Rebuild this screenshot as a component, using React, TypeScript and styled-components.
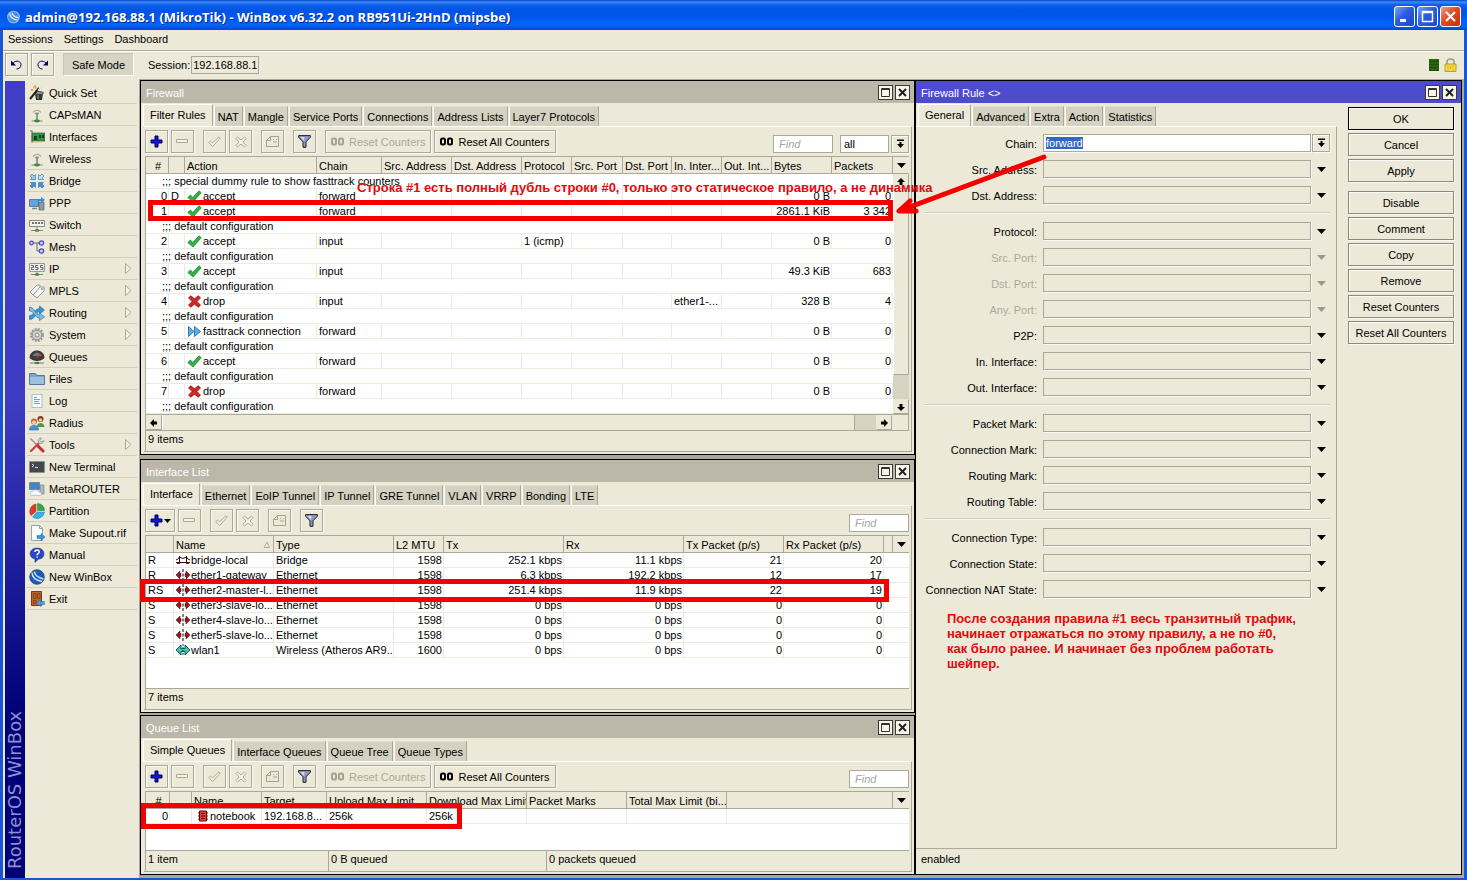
import React, { useEffect, useRef } from "react";
import styled, { createGlobalStyle, css } from "styled-components";

const FACE = "#ece9d8";
const SHADE = "#aca899";
const MARK = "#f40000";
const UI_FONT = '"Liberation Sans", Arial, sans-serif';

const GlobalStyle = createGlobalStyle`
  *, *::before, *::after { box-sizing: border-box; }
  html, body { margin: 0; }
  body, button, input, select, table {
    font-family: ${UI_FONT};
    font-size: 11px;
    line-height: 14px;
    color: #000;
  }
  button, input, select { margin: 0; padding: 0; border-radius: 0; }
  svg { display: block; flex: none; }
`;

/* ---------- application frame ---------- */

const AppFrame = styled.div`
  min-height: 100vh;
  display: flex;
  flex-direction: column;
  background: ${FACE};
  border: solid #1a55d8;
  border-width: 0 3px 2px 3px;
`;

const TitleBar = styled.header`
  height: 30px;
  margin: 0 -3px;
  padding: 3px 6px 0 7px;
  display: flex;
  align-items: center;
  gap: 5px;
  background: linear-gradient(#0a3fc4 0, #3d8bf8 2px, #0a5ee8 5px, #0054e3 11px, #0058ee 18px, #0066ff 25px, #0048d0 30px);
`;

const AppTitle = styled.h1`
  margin: 0;
  flex: 1;
  font: bold 13px/18px "Open Sans", "Noto Sans", sans-serif;
  color: #fff;
  text-shadow: 1px 1px 0 #0a2a80;
  white-space: nowrap;
`;

const CaptionButtons = styled.div`
  display: flex;
  gap: 2px;
`;

const CaptionButton = styled.button<{ $close?: boolean }>`
  width: 21px;
  height: 21px;
  display: grid;
  place-items: center;
  border: 1px solid #fff;
  border-radius: 3px;
  background: ${(p) =>
    p.$close
      ? "linear-gradient(135deg, #f0a088, #e04a20 45%, #c83010)"
      : "linear-gradient(135deg, #7ea2f8, #2a5ce0 45%, #1c48c8)"};
`;

const MenuBar = styled.nav`
  height: 21px;
  padding: 0 5px 2px;
  display: flex;
  align-items: center;
  gap: 11px;
  border-bottom: 1px solid ${SHADE};
`;

const MenuButton = styled.button`
  border: 0;
  background: none;
`;

const ToolBar = styled.div`
  height: 28px;
  padding: 0 7px 2px 2px;
  display: flex;
  align-items: center;
  border-top: 1px solid #fff;
`;

const bevel = css`
  border: 1px solid ${SHADE};
  background: ${FACE};
  box-shadow: inset 1px 1px 0 #fbfaf4, 1px 1px 0 #fbfaf4;
`;

const IconButton = styled.button<{ $wide?: boolean }>`
  ${bevel}
  width: ${(p) => (p.$wide ? 30 : 23)}px;
  height: 23px;
  display: flex;
  align-items: center;
  justify-content: center;
  gap: 1px;
`;

const SafeModeButton = styled.button`
  width: 71px;
  height: 23px;
  margin-left: 9px;
  border: 1px solid #c8c5b4;
  border-right-color: #fff;
  border-bottom-color: #fff;
  background: #d6d3c3;
`;

const SessionLabel = styled.label`
  margin-left: 14px;
  display: flex;
  align-items: center;
  gap: 1px;
`;

const SessionInput = styled.input`
  width: 68px;
  height: 18px;
  padding: 0 1px;
  border: 1px solid ${SHADE};
  background: ${FACE};
`;

const ToolGroup = styled.div`
  display: flex;
  gap: 3px;
`;

const StatusIcons = styled.div`
  margin-left: auto;
  display: flex;
  align-items: center;
  gap: 5px;
`;

const Meter = styled.span`
  width: 10px;
  height: 12px;
  background: repeating-linear-gradient(#2a6410 0 2px, #1e5008 2px 3px);
`;

const Body = styled.div`
  flex: 1;
  display: flex;
`;

const BrandStrip = styled.aside`
  width: 20px;
  margin: 2px 2px 0;
  padding: 9px 0;
  writing-mode: vertical-rl;
  transform: rotate(180deg);
  background: linear-gradient(to top, #403ec4 0, #3e3cc2 40%, #000078 80%);
  font: 18px/20px "DejaVu Sans", sans-serif;
  color: #8f8fd0;
`;

const SideMenu = styled.nav`
  width: 110px;
  margin-right: 2px;
  padding-top: 3px;
`;

const SideItem = styled.a`
  height: 22px;
  padding: 0 5px 0 2px;
  display: flex;
  align-items: center;
  gap: 4px;
  border-bottom: 1px solid #d2cfc0;
  color: #000;
  text-decoration: none;
  white-space: nowrap;
`;

const SideArrow = styled.svg`
  margin-left: auto;
`;

/* ---------- desktop with inner windows ---------- */

const Desktop = styled.main`
  position: relative;
  flex: 1;
  min-width: 0;
  display: grid;
  grid-template-columns: minmax(0, 775fr) minmax(0, 547fr);
  padding: 1px 2px 3px 1px;
  background: #aca899;
`;

const WindowColumn = styled.div`
  display: flex;
  flex-direction: column;
`;

const Win = styled.section<{ $gap?: number; $fill?: boolean }>`
  display: flex;
  flex-direction: column;
  margin-bottom: ${(p) => p.$gap || 0}px;
  flex: ${(p) => (p.$fill ? "1 0 auto" : "none")};
  border: 1px solid #000;
  background: ${FACE};
`;

const WinTitle = styled.header<{ $active?: boolean }>`
  height: 22px;
  padding: 1px 4px 0 5px;
  display: flex;
  align-items: center;
  gap: 2px;
  color: #fff;
  background: ${(p) => (p.$active ? "#4d4ccd" : "#bcb8a9")};
`;

const WinName = styled.h2`
  margin: 0;
  flex: 1;
  font: inherit;
`;

const WinButton = styled.button`
  width: 15px;
  height: 15px;
  display: grid;
  place-items: center;
  border: 1px solid #3c3a32;
  background: #f8f6ec;
`;

const Tabs = styled.div`
  height: 23px;
  padding-left: 2px;
  display: flex;
  align-items: flex-end;
  gap: 1px;
`;

const Tab = styled.button<{ $active?: boolean }>`
  height: ${(p) => (p.$active ? 22 : 20)}px;
  padding: ${(p) => (p.$active ? "0 6px 2px" : "0 3px")};
  border: solid;
  border-width: 1px 1px 0 1px;
  border-color: ${(p) => (p.$active ? "#fff" : "#e2dfce")} ${SHADE} #fff #fff;
  background: ${(p) => (p.$active ? FACE : "#d4d1c1")};
  white-space: nowrap;
`;

const Page = styled.div`
  flex: 1;
  display: flex;
  flex-direction: column;
  margin: 0 2px 2px 3px;
  padding: 0 2px 0 1px;
  border: solid;
  border-width: 1px 1px 1px 0;
  border-color: #fff ${SHADE} ${SHADE};
`;

const ListTools = styled.div`
  height: 29px;
  padding: 3px 0 3px;
  display: flex;
  align-items: flex-end;
  gap: 9px;
`;

const CounterButton = styled.button`
  ${bevel}
  height: 23px;
  padding: 0 5px;
  display: flex;
  align-items: center;
  gap: 4px;
  white-space: nowrap;
  &:disabled { color: ${SHADE}; }
`;

const Filters = styled.div`
  margin-left: auto;
  display: flex;
  gap: 2px;
`;

const FindInput = styled.input`
  width: 60px;
  height: 18px;
  padding: 0 5px;
  border: 1px solid ${SHADE};
  background: #fff;
  &::placeholder { color: #a5a5a0; font-style: italic; opacity: 1; }
`;

const FilterSelect = styled.select`
  width: 49px;
  height: 18px;
  margin-left: 5px;
  padding: 0 3px;
  appearance: none;
  border: 1px solid ${SHADE};
  background: #fff;
`;

const DropButton = styled.button<{ $flat?: boolean }>`
  ${bevel}
  width: 18px;
  height: 18px;
  display: grid;
  place-items: center;
  ${(p) => p.$flat && "border-color: transparent; background: none; box-shadow: none;"}
`;

const ListArea = styled.div<{ $min?: number }>`
  flex: 1;
  min-height: ${(p) => p.$min || 0}px;
  display: flex;
  border: solid ${SHADE};
  border-width: 1px 0 1px 1px;
  background: #fff;
`;

const Table = styled.table`
  flex: 1;
  width: 100%;
  align-self: flex-start;
  table-layout: fixed;
  border-spacing: 0;
  white-space: nowrap;
`;

const Th = styled.th<{ $center?: boolean }>`
  height: 17px;
  padding: 1px 0 0 2px;
  overflow: hidden;
  font-weight: normal;
  text-align: ${(p) => (p.$center ? "center" : "left")};
  background: ${FACE};
  border-right: 1px solid ${SHADE};
  border-bottom: 1px solid ${SHADE};
`;

const HeadInner = styled.span`
  display: flex;
  align-items: center;
  justify-content: space-between;
`;

const Td = styled.td<{ $num?: boolean; $bare?: boolean }>`
  height: 15px;
  padding: ${(p) => (p.$num ? "0 1px 0 0" : "0 0 0 2px")};
  overflow: hidden;
  text-align: ${(p) => (p.$num ? "right" : "left")};
  border-bottom: 1px solid #ecebe2;
  border-right: ${(p) => (p.$bare ? 0 : "1px solid #ecebe2")};
`;

const CommentTd = styled.td`
  height: 15px;
  padding: 0 0 0 16px;
  border-bottom: 1px solid #ecebe2;
`;

const CellInner = styled.span<{ $indent?: boolean }>`
  display: flex;
  align-items: center;
  gap: 1px;
  padding-left: ${(p) => (p.$indent ? 3 : 0)}px;
  height: 14px;
`;

const HeadButton = styled.button`
  width: 16px;
  height: 17px;
  display: grid;
  place-items: center;
  border: 0;
  border-bottom: 1px solid ${SHADE};
  background: ${FACE};
`;

const HeadButtonCell = styled.th`
  padding: 0;
  height: 17px;
`;

const SideRail = styled.div`
  width: 16px;
  display: flex;
  flex-direction: column;
`;

const VTrack = styled.div`
  flex: 1;
  display: flex;
  flex-direction: column;
  background: #d6d3c3;
`;

const ScrollButton = styled.button`
  width: 16px;
  height: 15px;
  display: grid;
  place-items: center;
  border: 1px solid ${FACE};
  border-bottom-color: ${SHADE};
  border-right-color: ${SHADE};
  background: ${FACE};
`;

const VThumb = styled.div`
  flex: 1;
  margin-bottom: 24px;
  border: 1px solid ${SHADE};
  border-top-color: #fff;
  border-left-color: #fff;
  background: ${FACE};
`;

const HTrack = styled.div`
  height: 16px;
  display: flex;
  background: #d6d3c3;
  border: solid ${SHADE};
  border-width: 0 1px 1px 1px;
`;

const HThumb = styled.div`
  flex: 1;
  margin-right: 21px;
  border-left: 1px solid #fff;
  border-right: 1px solid ${SHADE};
  background: ${FACE};
`;

const Corner = styled.div`
  width: 16px;
  background: ${FACE};
`;

const StatusLine = styled.footer`
  height: 20px;
  display: flex;
`;

const StatusCell = styled.span<{ $basis?: number }>`
  flex: ${(p) => (p.$basis ? `0 0 ${p.$basis}px` : "1")};
  padding: 1px 2px;
  border-left: 1px solid ${SHADE};
`;

/* ---------- rule editor ---------- */

const RuleBody = styled.div`
  flex: 1;
  display: flex;
`;

const RuleMain = styled.div`
  flex: 1;
  min-width: 0;
  display: flex;
  flex-direction: column;
`;

const Form = styled.form`
  flex: 1;
  padding: 7px 6px 0 0;
  border: solid;
  border-width: 1px 1px 1px 0;
  border-color: #fff ${SHADE} ${SHADE};
`;

const FieldGroup = styled.div`
  display: flex;
  flex-direction: column;
  gap: 8px;
  & + & {
    margin-top: 8px;
    padding-top: 9px;
    border-top: 1px solid #d2cfc0;
    box-shadow: inset 0 1px 0 #f8f6ec;
    margin-left: 8px;
  }
`;

const Field = styled.div`
  height: 18px;
  display: flex;
  align-items: center;
  justify-content: flex-end;
`;

const FieldLabel = styled.label<{ $dim?: boolean }>`
  flex: 1;
  padding-right: 6px;
  padding-top: 1px;
  text-align: right;
  white-space: nowrap;
  color: ${(p) => (p.$dim ? SHADE : "#000")};
`;

const FieldInput = styled.input<{ $filled?: boolean }>`
  width: 268px;
  height: 18px;
  padding: 0 2px;
  margin-right: 1px;
  border: 1px solid ${SHADE};
  background: ${(p) => (p.$filled ? "#fff" : FACE)};
  outline: none;
  box-shadow: 1px 1px 0 #fbfaf4;
  &::selection { color: #fff; background: #316ac5; }
`;

const Actions = styled.div`
  width: 124px;
  padding: 4px 7px 0 11px;
  display: flex;
  flex-direction: column;
  gap: 9px;
`;

const ActionGroup = styled.div`
  display: flex;
  flex-direction: column;
  gap: 3px;
`;

const ActionButton = styled.button<{ $primary?: boolean }>`
  height: 23px;
  border: 1px solid ${(p) => (p.$primary ? "#000" : "#8c897a")};
  background: ${FACE};
  box-shadow: inset 1px 1px 0 #fbfaf4, 1px 1px 0 #fbfaf4;
  white-space: nowrap;
`;

const RuleStatus = styled.footer`
  height: 25px;
  padding: 3px 5px;
`;

/* ---------- red notes over the desktop ---------- */

const MarkBox = styled.div<{ $x: number; $y: number; $w: number; $h: number }>`
  position: absolute;
  left: ${(p) => p.$x}px;
  top: ${(p) => p.$y}px;
  width: ${(p) => p.$w}px;
  height: ${(p) => p.$h}px;
  border: 5px solid ${MARK};
  pointer-events: none;
`;

const Note = styled.p<{ $x: number; $y: number }>`
  position: absolute;
  left: ${(p) => p.$x}px;
  top: ${(p) => p.$y}px;
  margin: 0;
  font: bold 13px/15px "Liberation Sans", Arial, sans-serif;
  color: #e00b0b;
  white-space: nowrap;
`;

const ArrowMark = styled.svg`
  position: absolute;
  left: 751px;
  top: 71px;
  pointer-events: none;
`;

/* ---------- icons ---------- */

const icon = (children: React.ReactNode) => (
  <svg width="16" height="16" viewBox="0 0 16 16" aria-hidden="true">
    {children}
  </svg>
);

const antenna = icon(
  <>
    <path d="M4 5.500q4-4.500 8 0M6 7q2-2 4 0" fill="none" stroke="#a3a69c" strokeWidth="1.2" />
    <path d="M8 6v7" stroke="#6c7a68" strokeWidth="1.4" />
    <path d="M2.500 14h11" stroke="#8c9a88" strokeWidth="1.2" />
    <ellipse cx="8" cy="14" rx="3" ry="1.4" fill="#3c8a3c" />
  </>
);

const ICONS: Record<string, React.ReactNode> = {
  "Quick Set": icon(
    <>
      <path d="M6 8h8l-1 7H7z" fill="#333" />
      <ellipse cx="10" cy="8" rx="4.500" ry="1.500" fill="#999" stroke="#222" strokeWidth=".7" />
      <path d="M1 14 10 3" stroke="#222" strokeWidth="2" />
      <path d="M9 5.500 12 2" stroke="#ddd" strokeWidth="1.500" />
      <path d="M6 0v4M4 2h4M2 4l2 2M2 6l2-2" stroke="#d9a520" strokeWidth="1" />
      <path d="M9 10v4" stroke="#aaa" />
    </>
  ),
  CAPsMAN: antenna,
  Interfaces: icon(
    <>
      <path d="M1 2h2v12" fill="none" stroke="#8a8d86" strokeWidth="1.300" />
      <path d="M3 4h13v8H3z" fill="#3f8f4c" stroke="#2a6535" strokeWidth=".7" />
      <path d="M5 7h3v4H5zM10 6h2v3h-2zM13 6h2v3h-2z" fill="#163f1f" />
      <path d="M5 12v1.500M7 12v1.500M9 12v1.500M11 12v1.500" stroke="#c9b34a" />
    </>
  ),
  Wireless: antenna,
  Bridge: icon(
    <g stroke="#2a6ea8" strokeWidth=".6">
      <path d="M1 3l2-2 2 2 1.500-1.500v5h-5L3 5z" fill="#9ccdf0" />
      <path d="M15 3l-2-2-2 2-1.500-1.500v5h5L13 5z" fill="#c5e1f4" />
      <path d="M1 13l2 2 2-2 1.500 1.500v-5h-5L3 11z" fill="#3d94d8" />
      <path d="M15 13l-2 2-2-2-1.500 1.500v-5h5L13 11z" fill="#3d94d8" />
    </g>
  ),
  PPP: icon(
    <>
      <path d="M.5 4.500h9v7h-9z" fill="#5ea6e0" stroke="#6a7d90" />
      <path d="M3 13.500h5" stroke="#7c8894" strokeWidth="1.500" />
      <path d="M10 7h5v8h-5z" fill="#8c98a4" stroke="#5a6672" strokeWidth=".7" />
      <path d="M8 4h4V2l4 3-4 3V6H8z" fill="#2f8edc" />
    </>
  ),
  Switch: icon(
    <>
      <path d="M.5 3.500h15v6H.5z" fill="#f4f4ee" stroke="#888" />
      <path d="M3 6h2M6 6h2M9 6h2M12 6h2" stroke="#444" strokeWidth="1.500" />
      <path d="M8 10v3M2 13.500h12" stroke="#888" />
      <ellipse cx="8" cy="13.500" rx="2.500" ry="1.300" fill="#3c8a3c" />
    </>
  ),
  Mesh: icon(
    <>
      <path d="M3 4h9M8 4v8h4" fill="none" stroke="#666" />
      <g fill="#c9c9f6" stroke="#4a4ac0" strokeWidth="1.200">
        <circle cx="2.500" cy="4" r="1.800" />
        <circle cx="12.500" cy="4" r="2.200" />
        <circle cx="12.500" cy="12" r="2.200" />
      </g>
    </>
  ),
  IP: icon(
    <>
      <path d="M.5 2.500h15v8H.5z" fill="#f1f1ec" stroke="#999" />
      <path d="M2 4.500h2.500v2H2.500v2H5M9 4.500H6.500v2H9v2H6.500M14 4.500h-2.500v2H14v2h-2.500" fill="none" stroke="#555" strokeWidth=".9" />
      <path d="M8 11v2M2 13.500h12" stroke="#888" />
      <ellipse cx="8" cy="13.500" rx="2.500" ry="1.300" fill="#3c8a3c" />
    </>
  ),
  MPLS: icon(
    <g fill="#f3f4f4" stroke="#8f979c" strokeWidth=".9">
      <path d="M1 9 8 2l3 0 0 3-7 7z" />
      <path d="M4 12 11 4l4 0 0 4-7 7z" />
      <circle cx="13" cy="6" r=".8" />
    </g>
  ),
  Routing: icon(
    <>
      <path d="M.5 10.500c5 0 5-7 10-7V1l5 4-5 4V6.500c-3 0-4 8-10 8z" fill="#3b92d6" stroke="#25689e" strokeWidth=".6" />
      <path d="M.5 2c5 0 6 8 10 8V7.500l5 4.500-5 3.500V13C6 13 5 6 .5 6z" fill="#79bbea" stroke="#25689e" strokeWidth=".6" />
    </>
  ),
  System: icon(
    <>
      <circle cx="8" cy="8" r="6" fill="none" stroke="#989898" strokeWidth="2" strokeDasharray="2 1.140" />
      <circle cx="8" cy="8" r="4.800" fill="#d2d2d0" stroke="#8a8a8a" />
      <circle cx="8" cy="8" r="2" fill={FACE} stroke="#8a8a8a" />
    </>
  ),
  Queues: icon(
    <>
      <path d="M.5 9C.5-1 15.500-1 15.500 9q-3 3-7.500 3T.5 9z" fill="#3a3a3a" />
      <path d="M3 7q5-7 10 0z" fill="#777" />
      <path d="m7 9 5-4" stroke="#d03030" strokeWidth="1.300" />
      <path d="M1 14h14" stroke="#777" />
      <ellipse cx="8" cy="14" rx="2.500" ry="1.300" fill="#3c8a3c" />
    </>
  ),
  Files: icon(
    <>
      <path d="M.5 2.500h6l1 2h8v9H.5z" fill="#7ba6cc" stroke="#4f7ba2" />
      <path d="M1 6h14v7H1z" fill="#9cc0de" />
    </>
  ),
  Log: icon(
    <>
      <path d="m3 1 1 1 1-1 1 1 1-1 1 1 1-1 1 1 1-1 1 1 1-1v14l-1-1-1 1-1-1-1 1-1-1-1 1-1-1-1 1-1-1-1 1z" fill="#f6fafb" stroke="#9cacb4" strokeWidth=".7" />
      <path d="M5 4.500h3M5 6.500h6M5 8.500h5M5 10.500h6" stroke="#7fa3b5" />
    </>
  ),
  Radius: icon(
    <>
      <circle cx="11.500" cy="4" r="3" fill="#7d3a1c" />
      <circle cx="11.500" cy="5" r="1.800" fill="#f0c8a0" />
      <path d="M8 12q0-4 3.500-4t4 4z" fill="#4c9a4c" />
      <circle cx="5" cy="6.500" r="3" fill="#c06a24" />
      <circle cx="5" cy="7.500" r="1.900" fill="#f5d3b0" />
      <path d="M.5 15q0-4.500 4.500-4.500T9.500 15z" fill="#4b8fd4" stroke="#2a68a8" strokeWidth=".6" />
    </>
  ),
  Tools: icon(
    <>
      <path d="m1.500 1.500 8 8" stroke="#999" strokeWidth="1.600" />
      <path d="m9 9 5 5" stroke="#c03030" strokeWidth="3" strokeLinecap="round" />
      <path d="m2 14 8-8" stroke="#c84040" strokeWidth="2.200" strokeLinecap="round" />
      <path d="M15 3.500 12.500 5 11 3.500 12.500 1C9.500.5 8.500 3.500 9.500 6c2.500 1.500 5.500 0 5.500-2.500z" fill="#d0d4d6" stroke="#83898c" strokeWidth=".7" />
    </>
  ),
  "New Terminal": icon(
    <>
      <path d="M.5 2.500h15v11H.5z" fill="#44484c" stroke="#8c9094" />
      <path d="m3 5 2 1.500L3 8M6 8.500h3" fill="none" stroke="#dfe3e6" />
    </>
  ),
  MetaROUTER: icon(
    <>
      <path d="M.5 1.500h10v7H.5z" fill="#3f86cc" stroke="#7a8794" />
      <path d="M11 4h4v9h-4z" fill="#b0b8c0" stroke="#6c7884" strokeWidth=".6" />
      <path d="M3 14.500q-2.500-.5-2-2.500t2.500-1.500Q5 8 7.500 9t2.500 2q2.500 0 2.500 1.800t-2 1.700z" fill="#f5f8fa" stroke="#a0adb8" strokeWidth=".6" />
    </>
  ),
  Partition: icon(
    <>
      <path d="M7 8.500V1a7.500 7.500 0 0 0-5 11.500z" fill="#dc3b30" stroke="#a82018" strokeWidth=".5" />
      <path d="M8.500 7.500V.5a7 7 0 0 1 7 7z" fill="#35a84a" stroke="#1c7a30" strokeWidth=".5" />
      <path d="M8 9h7.500a7.500 7.500 0 0 1-12 5z" fill="#40b0e0" stroke="#2484b4" strokeWidth=".5" />
    </>
  ),
  "Make Supout.rif": icon(
    <>
      <path d="M2.500.5h8l3 3v12h-11z" fill="#fbfdfd" stroke="#94a4ac" />
      <path d="M10.500.5v3h3" fill="none" stroke="#94a4ac" />
      <path d="M8 10.500h4v-2l4 3.500-4 3.500v-2H8z" fill="#3c94dc" stroke="#1f68a4" strokeWidth=".5" />
    </>
  ),
  Manual: icon(
    <>
      <path d="M8 1c9 0 9 11 1.500 11L6 15.500V12C-1.500 10.500 0 1 8 1z" fill="#2c48c4" stroke="#172c88" strokeWidth=".6" />
      <path d="M5.800 5q.3-2 2.300-2t2.200 1.800Q10.300 6 8.200 7.500v.8M8.200 9.500v1.300" fill="none" stroke="#fff" strokeWidth="1.500" />
    </>
  ),
  "New WinBox": icon(
    <>
      <circle cx="8" cy="8" r="7.300" fill="#1d5eb0" stroke="#123a78" strokeWidth=".7" />
      <path d="M3 3.500q0 7 10 9M5.500 2.500q0 5 9 7.500" fill="none" stroke="#cfe4fa" strokeWidth="1.500" />
    </>
  ),
  Exit: icon(
    <>
      <path d="M2.500.5h10v14h-10z" fill="#b8682c" stroke="#7a3c12" />
      <path d="M4.500 2.500h2.500v5H4.500zM8.500 2.500H11v5H8.500zM4.500 9.500h2.500v3H4.500z" fill="none" stroke="#7a3c12" strokeWidth=".8" />
      <path d="M15.500 10.500h-4v-2L7.500 12l4 3.500v-2h4z" fill="#48a0e4" stroke="#1f68a4" strokeWidth=".5" />
    </>
  ),
};

const AppLogo = () => (
  <svg width="13" height="14" viewBox="0 0 14 14" aria-hidden="true">
    <circle cx="7" cy="7" r="6.800" fill="#9cc4f4" />
    <circle cx="7" cy="7" r="5.800" fill="#4f8cdc" />
    <path d="M3 3q0 6 8.500 7.500M5.500 2.500q0 4 7 5.500" fill="none" stroke="#e8f2ff" strokeWidth="1.300" />
  </svg>
);

const Caret = ({ dim }: { dim?: boolean }) => (
  <svg width="9" height="5" viewBox="0 0 9 5" aria-hidden="true">
    <path d="M0 0h9L4.500 5z" fill={dim ? "#9c998a" : "#000"} />
  </svg>
);

const DropArrow = () => (
  <svg width="9" height="10" viewBox="0 0 9 10" aria-hidden="true">
    <path d="M1 0.500h7v1.500H1zM3.500 3h2v2H8L4.500 9 1 5h2.500z" />
  </svg>
);

const ScrollGlyph = ({ turn }: { turn: number }) => (
  <svg width="8" height="8" viewBox="0 0 8 8" aria-hidden="true">
    <path d="M4 0 8 4H5.500v3h-3V4H0z" transform={`rotate(${turn} 4 4)`} />
  </svg>
);

const Plus = () => (
  <svg width="13" height="13" viewBox="0 0 13 13" aria-hidden="true">
    <path d="M5 1h3v4h4v3H8v4H5V8H1V5h4z" fill="#1414d8" stroke="#00005c" strokeWidth="1" />
  </svg>
);

const Minus = () => (
  <svg width="13" height="5" viewBox="0 0 13 5" aria-hidden="true">
    <path d="M.5.5h11v3H.5z" fill="#f6f4ea" stroke={SHADE} />
  </svg>
);

const TickOutline = () => (
  <svg width="13" height="12" viewBox="0 0 13 12" aria-hidden="true">
    <path d="m.8 6.500 1.700-1.500 2 2L11 .8l1.200 1.200-7.500 8.500z" fill="#f6f4ea" stroke={SHADE} />
  </svg>
);

const CrossOutline = () => (
  <svg width="12" height="12" viewBox="0 0 12 12" aria-hidden="true">
    <path d="m1 2.500 1.500-1.500L6 4l3.500-3L11 2.500 8 6l3 3.500L9.500 11 6 8l-3.500 3L1 9.500 4 6z" fill="#f6f4ea" stroke={SHADE} />
  </svg>
);

const CommentOutline = () => (
  <svg width="14" height="12" viewBox="0 0 14 12" aria-hidden="true">
    <path d="M4.500.5h8v10h-12v-6zM4.500.5v4h-4M7 3.500h1M10 3.500h1M7 6h4" fill="none" stroke="#a5a193" />
  </svg>
);

const Funnel = () => (
  <svg width="13" height="13" viewBox="0 0 13 13" aria-hidden="true">
    <path d="M.6.6h11.800v1.600L8 6.800v5.500H5V6.800L.6 2.200z" fill="#8d99c4" stroke="#222" strokeWidth="1" />
    <path d="M2.500 2h4L6 6z" fill="#d8def2" />
  </svg>
);

const Zeros = ({ dim }: { dim?: boolean }) => (
  <svg width="14" height="9" viewBox="0 0 14 9" aria-hidden="true">
    <g fill="none" stroke={dim ? "#a5a193" : "#000"} strokeWidth="2">
      <rect x="1" y="1.500" width="4" height="6" rx="1.500" />
      <rect x="8" y="1.500" width="4" height="6" rx="1.500" />
    </g>
  </svg>
);

const ACTION_ICONS: Record<string, React.ReactNode> = {
  accept: (
    <svg width="15" height="13" viewBox="0 0 15 13" aria-hidden="true">
      <path d="m.8 7.500 2.700-2.500 2.300 2.500L12 .8l2.200 2L6 12z" fill="#2fb344" stroke="#1c8a30" strokeWidth=".8" />
    </svg>
  ),
  drop: (
    <svg width="15" height="13" viewBox="0 0 15 13" aria-hidden="true">
      <path d="m1.500 2.800 2.300-2 3.700 3 3.700-3 2.300 2L10 6.500l3.500 3.700-2.300 2-3.700-3-3.700 3-2.300-2L5 6.500z" fill="#cc2a2a" stroke="#8c1414" strokeWidth=".8" />
    </svg>
  ),
  "fasttrack connection": (
    <svg width="15" height="13" viewBox="0 0 15 13" aria-hidden="true">
      <path d="M1.500 1.500 7 6.500l-5.500 5zM7.500 1.500l6 5-6 5z" fill="#58aee4" stroke="#2474b0" strokeWidth=".9" />
    </svg>
  ),
};

const PORT_ICONS: Record<string, React.ReactNode> = {
  bridge: (
    <svg width="14" height="10" viewBox="0 0 14 10" aria-hidden="true">
      <path d="M3.500 1v8M10.500 1v8M0 7.500h14M0 5q3-1 3.500-3 3.500 3 7 0 .5 2 3.500 3" fill="none" stroke="#2a0c12" />
      <path d="M1 8.500h3M10 8.500h3" stroke="#a01828" />
    </svg>
  ),
  ether: (
    <svg width="14" height="12" viewBox="0 0 14 12" aria-hidden="true">
      <path d="M0 6l4-4v2.500h1v3H4V10zM14 6l-4-4v2.500H9v3h1V10z" fill="#9c1426" stroke="#2c0408" strokeWidth=".5" />
      <path d="M7 0v3M7 4.500v3M7 9v3" stroke="#000" />
    </svg>
  ),
  wlan: (
    <svg width="14" height="12" viewBox="0 0 14 12" aria-hidden="true">
      <path d="M0 6l5-5v3.500h4V1l5 5-5 5V7.500H5V11z" fill="#35c6b4" stroke="#0c4c48" strokeWidth=".9" />
      <path d="M7 0v12" stroke="#0c3c3a" strokeDasharray="2 1" />
    </svg>
  ),
};

const QueueIcon = () => (
  <svg width="12" height="12" viewBox="0 0 12 12" aria-hidden="true">
    <path d="M2.500 1h7v10h-7z" fill="#e84040" stroke="#600" />
    <path d="M1 3h2M1 6h2M1 9h2M9 3h2M9 6h2M9 9h2M4 3.500h4M4 6h4M4 8.500h4" stroke="#600" />
  </svg>
);

/* ---------- shared pieces ---------- */

const WindowHeading = ({ name, active }: { name: string; active?: boolean }) => (
  <WinTitle $active={active}>
    <WinName>{name}</WinName>
    <WinButton aria-label={`Maximize ${name}`}>
      <svg width="9" height="9" viewBox="0 0 9 9" aria-hidden="true">
        <path d="M.5.5h8v8h-8zM0 1.500h9" fill="none" stroke="#33312a" />
      </svg>
    </WinButton>
    <WinButton aria-label={`Close ${name}`}>
      <svg width="9" height="9" viewBox="0 0 9 9" aria-hidden="true">
        <path d="m1 1 7 7M8 1 1 8" stroke="#222" strokeWidth="2" />
      </svg>
    </WinButton>
  </WinTitle>
);

const TabRow = ({ names }: { names: string[] }) => (
  <Tabs role="tablist">
    {names.map((n, i) => (
      <Tab key={n} type="button" role="tab" aria-selected={i === 0} $active={i === 0}>
        {n}
      </Tab>
    ))}
  </Tabs>
);

const ListToolBar = ({ menuAdd, counters, children }: { menuAdd?: boolean; counters?: boolean; children?: React.ReactNode }) => (
  <ListTools>
    <ToolGroup>
      <IconButton $wide={menuAdd} aria-label="Add">
        <Plus />
        {menuAdd && (
          <svg width="7" height="4" viewBox="0 0 7 4" aria-hidden="true">
            <path d="M0 0h7L3.500 4z" />
          </svg>
        )}
      </IconButton>
      <IconButton disabled aria-label="Remove"><Minus /></IconButton>
    </ToolGroup>
    <ToolGroup>
      <IconButton disabled aria-label="Enable"><TickOutline /></IconButton>
      <IconButton disabled aria-label="Disable"><CrossOutline /></IconButton>
    </ToolGroup>
    <IconButton disabled aria-label="Comment"><CommentOutline /></IconButton>
    <IconButton aria-label="Filter"><Funnel /></IconButton>
    {counters && (
      <ToolGroup>
        <CounterButton disabled><Zeros dim />Reset Counters</CounterButton>
        <CounterButton><Zeros />Reset All Counters</CounterButton>
      </ToolGroup>
    )}
    <Filters>
      <FindInput placeholder="Find" aria-label="Find" />
      {children}
    </Filters>
  </ListTools>
);

const Columns = ({ widths }: { widths: (number | null)[] }) => (
  <colgroup>
    {widths.map((w, i) => (
      <col key={i} width={w === null ? undefined : w} />
    ))}
  </colgroup>
);

const HeadCell = () => (
  <HeadButtonCell>
    <HeadButton aria-label="Select columns"><Caret /></HeadButton>
  </HeadButtonCell>
);

/* ---------- firewall list ---------- */

type Rule = { n: number; flag?: string; note?: string; action: string; chain: string; proto?: string; inIf?: string; bytes: string; packets: string };

const DEF = "default configuration";
const RULES: Rule[] = [
  { n: 0, flag: "D", note: "special dummy rule to show fasttrack counters", action: "accept", chain: "forward", bytes: "0 B", packets: "0" },
  { n: 1, action: "accept", chain: "forward", bytes: "2861.1 KiB", packets: "3 342" },
  { n: 2, note: DEF, action: "accept", chain: "input", proto: "1 (icmp)", bytes: "0 B", packets: "0" },
  { n: 3, note: DEF, action: "accept", chain: "input", bytes: "49.3 KiB", packets: "683" },
  { n: 4, note: DEF, action: "drop", chain: "input", inIf: "ether1-...", bytes: "328 B", packets: "4" },
  { n: 5, note: DEF, action: "fasttrack connection", chain: "forward", bytes: "0 B", packets: "0" },
  { n: 6, note: DEF, action: "accept", chain: "forward", bytes: "0 B", packets: "0" },
  { n: 7, note: DEF, action: "drop", chain: "forward", bytes: "0 B", packets: "0" },
];
const RULE_HEADS = ["#", "", "Action", "Chain", "Src. Address", "Dst. Address", "Protocol", "Src. Port", "Dst. Port", "In. Inter...", "Out. Int...", "Bytes", "Packets"];

const CommentRow = ({ text }: { text: string }) => (
  <tr>
    <CommentTd colSpan={13}>;;; {text}</CommentTd>
  </tr>
);

const FirewallWindow = () => (
  <Win $gap={4}>
    <WindowHeading name="Firewall" />
    <TabRow names={["Filter Rules", "NAT", "Mangle", "Service Ports", "Connections", "Address Lists", "Layer7 Protocols"]} />
    <Page>
      <ListToolBar counters>
        <FilterSelect aria-label="Chain filter" defaultValue="all">
          <option value="all">all</option>
        </FilterSelect>
        <DropButton aria-label="Open chain filter"><DropArrow /></DropButton>
      </ListToolBar>
      <ListArea>
        <Table>
          <Columns widths={[23, 16, 132, 65, 70, 70, 50, 51, 49, 50, 50, 60, null]} />
          <thead>
            <tr>
              {RULE_HEADS.map((h, i) => (
                <Th key={i} $center={i === 0}>{h}</Th>
              ))}
            </tr>
          </thead>
          <tbody>
            {RULES.map((r) => (
              <React.Fragment key={r.n}>
                {r.note && <CommentRow text={r.note} />}
                <tr>
                  <Td $num>{r.n}</Td>
                  <Td>{r.flag}</Td>
                  <Td><CellInner>{ACTION_ICONS[r.action]}{r.action}</CellInner></Td>
                  <Td>{r.chain}</Td>
                  <Td />
                  <Td />
                  <Td>{r.proto}</Td>
                  <Td />
                  <Td />
                  <Td>{r.inIf}</Td>
                  <Td />
                  <Td $num>{r.bytes}</Td>
                  <Td $num>{r.packets}</Td>
                </tr>
              </React.Fragment>
            ))}
            <CommentRow text={DEF} />
          </tbody>
        </Table>
        <SideRail>
          <HeadButton aria-label="Select columns"><Caret /></HeadButton>
          <VTrack>
            <ScrollButton aria-label="Scroll up"><ScrollGlyph turn={0} /></ScrollButton>
            <VThumb />
            <ScrollButton aria-label="Scroll down"><ScrollGlyph turn={180} /></ScrollButton>
          </VTrack>
        </SideRail>
      </ListArea>
      <HTrack>
        <ScrollButton aria-label="Scroll left"><ScrollGlyph turn={270} /></ScrollButton>
        <HThumb />
        <ScrollButton aria-label="Scroll right"><ScrollGlyph turn={90} /></ScrollButton>
        <Corner />
      </HTrack>
      <StatusLine><StatusCell>9 items</StatusCell></StatusLine>
    </Page>
  </Win>
);

/* ---------- interface list ---------- */

const PORTS: [string, string, string, string, string, string, string, string, string][] = [
  ["R", "bridge", "bridge-local", "Bridge", "1598", "252.1 kbps", "11.1 kbps", "21", "20"],
  ["R", "ether", "ether1-gateway", "Ethernet", "1598", "6.3 kbps", "192.2 kbps", "12", "17"],
  ["RS", "ether", "ether2-master-l...", "Ethernet", "1598", "251.4 kbps", "11.9 kbps", "22", "19"],
  ["S", "ether", "ether3-slave-lo...", "Ethernet", "1598", "0 bps", "0 bps", "0", "0"],
  ["S", "ether", "ether4-slave-lo...", "Ethernet", "1598", "0 bps", "0 bps", "0", "0"],
  ["S", "ether", "ether5-slave-lo...", "Ethernet", "1598", "0 bps", "0 bps", "0", "0"],
  ["S", "wlan", "wlan1", "Wireless (Atheros AR9...", "1600", "0 bps", "0 bps", "0", "0"],
];

const InterfaceWindow = () => (
  <Win $gap={2}>
    <WindowHeading name="Interface List" />
    <TabRow names={["Interface", "Ethernet", "EoIP Tunnel", "IP Tunnel", "GRE Tunnel", "VLAN", "VRRP", "Bonding", "LTE"]} />
    <Page>
      <ListToolBar menuAdd />
      <ListArea $min={154}>
        <Table>
          <Columns widths={[28, 100, 120, 50, 120, 120, 100, 100, null, 16]} />
          <thead>
            <tr>
              {["", "Name", "Type", "L2 MTU", "Tx", "Rx", "Tx Packet (p/s)", "Rx Packet (p/s)", ""].map((h, i) => (
                <Th key={i}>
                  {h === "Name" ? (
                    <HeadInner>
                      {h}
                      <svg width="10" height="8" viewBox="0 0 10 8" aria-hidden="true">
                        <path d="M1 6.500 4 1l2.500 5.500z" fill="none" stroke="#b4b0a0" />
                      </svg>
                    </HeadInner>
                  ) : h}
                </Th>
              ))}
              <HeadCell />
            </tr>
          </thead>
          <tbody>
            {PORTS.map(([flag, kind, name, ...rest]) => (
              <tr key={name}>
                <Td>{flag}</Td>
                <Td><CellInner>{PORT_ICONS[kind]}{name}</CellInner></Td>
                {rest.map((v, i) => (
                  <Td key={i} $num={i > 0}>{v}</Td>
                ))}
                <Td $bare />
                <Td $bare />
              </tr>
            ))}
          </tbody>
        </Table>
      </ListArea>
      <StatusLine><StatusCell>7 items</StatusCell></StatusLine>
    </Page>
  </Win>
);

/* ---------- queue list ---------- */

const QueueWindow = () => (
  <Win $fill>
    <WindowHeading name="Queue List" />
    <TabRow names={["Simple Queues", "Interface Queues", "Queue Tree", "Queue Types"]} />
    <Page>
      <ListToolBar counters />
      <ListArea $min={56}>
        <Table>
          <Columns widths={[24, 22, 70, 65, 100, 100, 100, 100, null, 16]} />
          <thead>
            <tr>
              {["#", "", "Name", "Target", "Upload Max Limit", "Download Max Limit", "Packet Marks", "Total Max Limit (bi...", ""].map((h, i) => (
                <Th key={i} $center={i === 0}>{h}</Th>
              ))}
              <HeadCell />
            </tr>
          </thead>
          <tbody>
            <tr>
              <Td $num>0</Td>
              <Td />
              <Td><CellInner $indent><QueueIcon />notebook</CellInner></Td>
              <Td>192.168.8...</Td>
              <Td>256k</Td>
              <Td>256k</Td>
              <Td />
              <Td />
              <Td $bare />
              <Td $bare />
            </tr>
          </tbody>
        </Table>
      </ListArea>
      <StatusLine>
        <StatusCell $basis={183}>1 item</StatusCell>
        <StatusCell $basis={218}>0 B queued</StatusCell>
        <StatusCell>0 packets queued</StatusCell>
      </StatusLine>
    </Page>
  </Win>
);

/* ---------- rule window ---------- */

const FIELD_GROUPS = [
  ["Chain", "Src. Address", "Dst. Address"],
  ["Protocol", "Src. Port", "Dst. Port", "Any. Port", "P2P", "In. Interface", "Out. Interface"],
  ["Packet Mark", "Connection Mark", "Routing Mark", "Routing Table"],
  ["Connection Type", "Connection State", "Connection NAT State"],
];

const RuleWindow = () => {
  const chain = useRef<HTMLInputElement>(null);
  useEffect(() => {
    chain.current?.focus();
    chain.current?.select();
  }, []);
  return (
    <Win $fill>
      <WindowHeading name="Firewall Rule <>" active />
      <RuleBody>
        <RuleMain>
          <TabRow names={["General", "Advanced", "Extra", "Action", "Statistics"]} />
          <Form>
            {FIELD_GROUPS.map((group) => (
              <FieldGroup key={group[0]}>
                {group.map((name) => {
                  const id = name.toLowerCase().replace(/[^a-z0-9]+/g, "-");
                  const dim = / Port$/.test(name);
                  const isChain = name === "Chain";
                  return (
                    <Field key={name}>
                      <FieldLabel htmlFor={id} $dim={dim}>{name}:</FieldLabel>
                      <FieldInput
                        id={id}
                        ref={isChain ? chain : undefined}
                        $filled={isChain}
                        defaultValue={isChain ? "forward" : ""}
                        disabled={dim}
                      />
                      <DropButton type="button" $flat={!isChain} disabled={dim} aria-label={`Choose ${name}`}>
                        {isChain ? <DropArrow /> : <Caret dim={dim} />}
                      </DropButton>
                    </Field>
                  );
                })}
              </FieldGroup>
            ))}
          </Form>
        </RuleMain>
        <Actions>
          <ActionGroup>
            <ActionButton $primary>OK</ActionButton>
            <ActionButton>Cancel</ActionButton>
            <ActionButton>Apply</ActionButton>
          </ActionGroup>
          <ActionGroup>
            {["Disable", "Comment", "Copy", "Remove", "Reset Counters", "Reset All Counters"].map((n) => (
              <ActionButton key={n}>{n}</ActionButton>
            ))}
          </ActionGroup>
        </Actions>
      </RuleBody>
      <RuleStatus>enabled</RuleStatus>
    </Win>
  );
};

/* ---------- page ---------- */

const WITH_SUBMENU = ["IP", "MPLS", "Routing", "System", "Tools"];

export default function App() {
  return (
    <>
      <GlobalStyle />
      <AppFrame>
        <TitleBar>
          <AppLogo />
          <AppTitle>admin@192.168.88.1 (MikroTik) - WinBox v6.32.2 on RB951Ui-2HnD (mipsbe)</AppTitle>
          <CaptionButtons>
            <CaptionButton aria-label="Minimize">
              <svg width="13" height="13" viewBox="0 0 13 13" aria-hidden="true"><path d="M2 9h6v3H2z" fill="#fff" /></svg>
            </CaptionButton>
            <CaptionButton aria-label="Maximize">
              <svg width="13" height="13" viewBox="0 0 13 13" aria-hidden="true"><path d="M1.500 1.500h10v10h-10zM1 2.500h11" fill="none" stroke="#fff" strokeWidth="1.500" /></svg>
            </CaptionButton>
            <CaptionButton $close aria-label="Close">
              <svg width="13" height="13" viewBox="0 0 13 13" aria-hidden="true"><path d="m2 2 9 9M11 2l-9 9" stroke="#fff" strokeWidth="2.200" /></svg>
            </CaptionButton>
          </CaptionButtons>
        </TitleBar>
        <MenuBar>
          <MenuButton>Sessions</MenuButton>
          <MenuButton>Settings</MenuButton>
          <MenuButton>Dashboard</MenuButton>
        </MenuBar>
        <ToolBar>
          <ToolGroup>
            <IconButton aria-label="Undo">
              <svg width="13" height="13" viewBox="0 0 13 13" aria-hidden="true">
                <path d="M3 5C6.500 1.500 11 3.500 11 6.500S9 11 6.500 11" fill="none" stroke="#00006c" strokeWidth="1" />
                <path d="M1 2.500v5h5z" fill="#00006c" />
              </svg>
            </IconButton>
            <IconButton aria-label="Redo">
              <svg width="13" height="13" viewBox="0 0 13 13" aria-hidden="true">
                <path d="M10 5C6.500 1.500 2 3.500 2 6.500S4 11 6.500 11" fill="none" stroke="#00006c" strokeWidth="1" />
                <path d="M12 2.500v5H7z" fill="#00006c" />
              </svg>
            </IconButton>
          </ToolGroup>
          <SafeModeButton>Safe Mode</SafeModeButton>
          <SessionLabel>
            Session:
            <SessionInput readOnly value="192.168.88.1" />
          </SessionLabel>
          <StatusIcons>
            <Meter />
            <svg width="13" height="14" viewBox="0 0 13 14" aria-hidden="true">
              <path d="M3 6V4q0-3 3.500-3T10 4v2" fill="none" stroke="#a09a78" strokeWidth="1.500" />
              <path d="M1 6h11v7.500H1z" fill="#f6dc4c" stroke="#a88c20" strokeWidth=".8" />
              <path d="M4 7v6M6.500 8v3M9 7v6" stroke="#d4ac20" strokeWidth=".8" />
            </svg>
          </StatusIcons>
        </ToolBar>
        <Body>
          <BrandStrip>RouterOS WinBox</BrandStrip>
          <SideMenu>
            {Object.keys(ICONS).map((name) => (
              <SideItem key={name} href="#">
                {ICONS[name]}
                {name}
                {WITH_SUBMENU.includes(name) && (
                  <SideArrow width="7" height="11" viewBox="0 0 7 11" aria-hidden="true">
                    <path d="M.5.5 6 5.500l-5.500 5z" fill="#f6f4ea" stroke={SHADE} />
                  </SideArrow>
                )}
              </SideItem>
            ))}
          </SideMenu>
          <Desktop>
            <WindowColumn>
              <FirewallWindow />
              <InterfaceWindow />
              <QueueWindow />
            </WindowColumn>
            <WindowColumn>
              <RuleWindow />
            </WindowColumn>
            <MarkBox $x={9} $y={121} $w={745} $h={21} />
            <MarkBox $x={1} $y={500} $w={749} $h={23} />
            <MarkBox $x={2} $y={724} $w={321} $h={26} />
            <Note $x={218} $y={101}>
              Строка #1 есть полный дубль строки #0, только это статическое правило, а не динамика
            </Note>
            <Note $x={808} $y={532}>
              После создания правила #1 весь транзитный трафик,
              <br />
              начинает отражаться по этому правилу, а не по #0,
              <br />
              как было ранее. И начинает без проблем работать
              <br />
              шейпер.
            </Note>
            <ArrowMark width="164" height="72" viewBox="0 0 164 72" aria-hidden="true">
              <path d="M154 7 9 61M20 51 9 61l17 0" fill="none" stroke={MARK} strokeWidth="5" strokeLinecap="round" strokeLinejoin="round" />
            </ArrowMark>
          </Desktop>
        </Body>
      </AppFrame>
    </>
  );
}
